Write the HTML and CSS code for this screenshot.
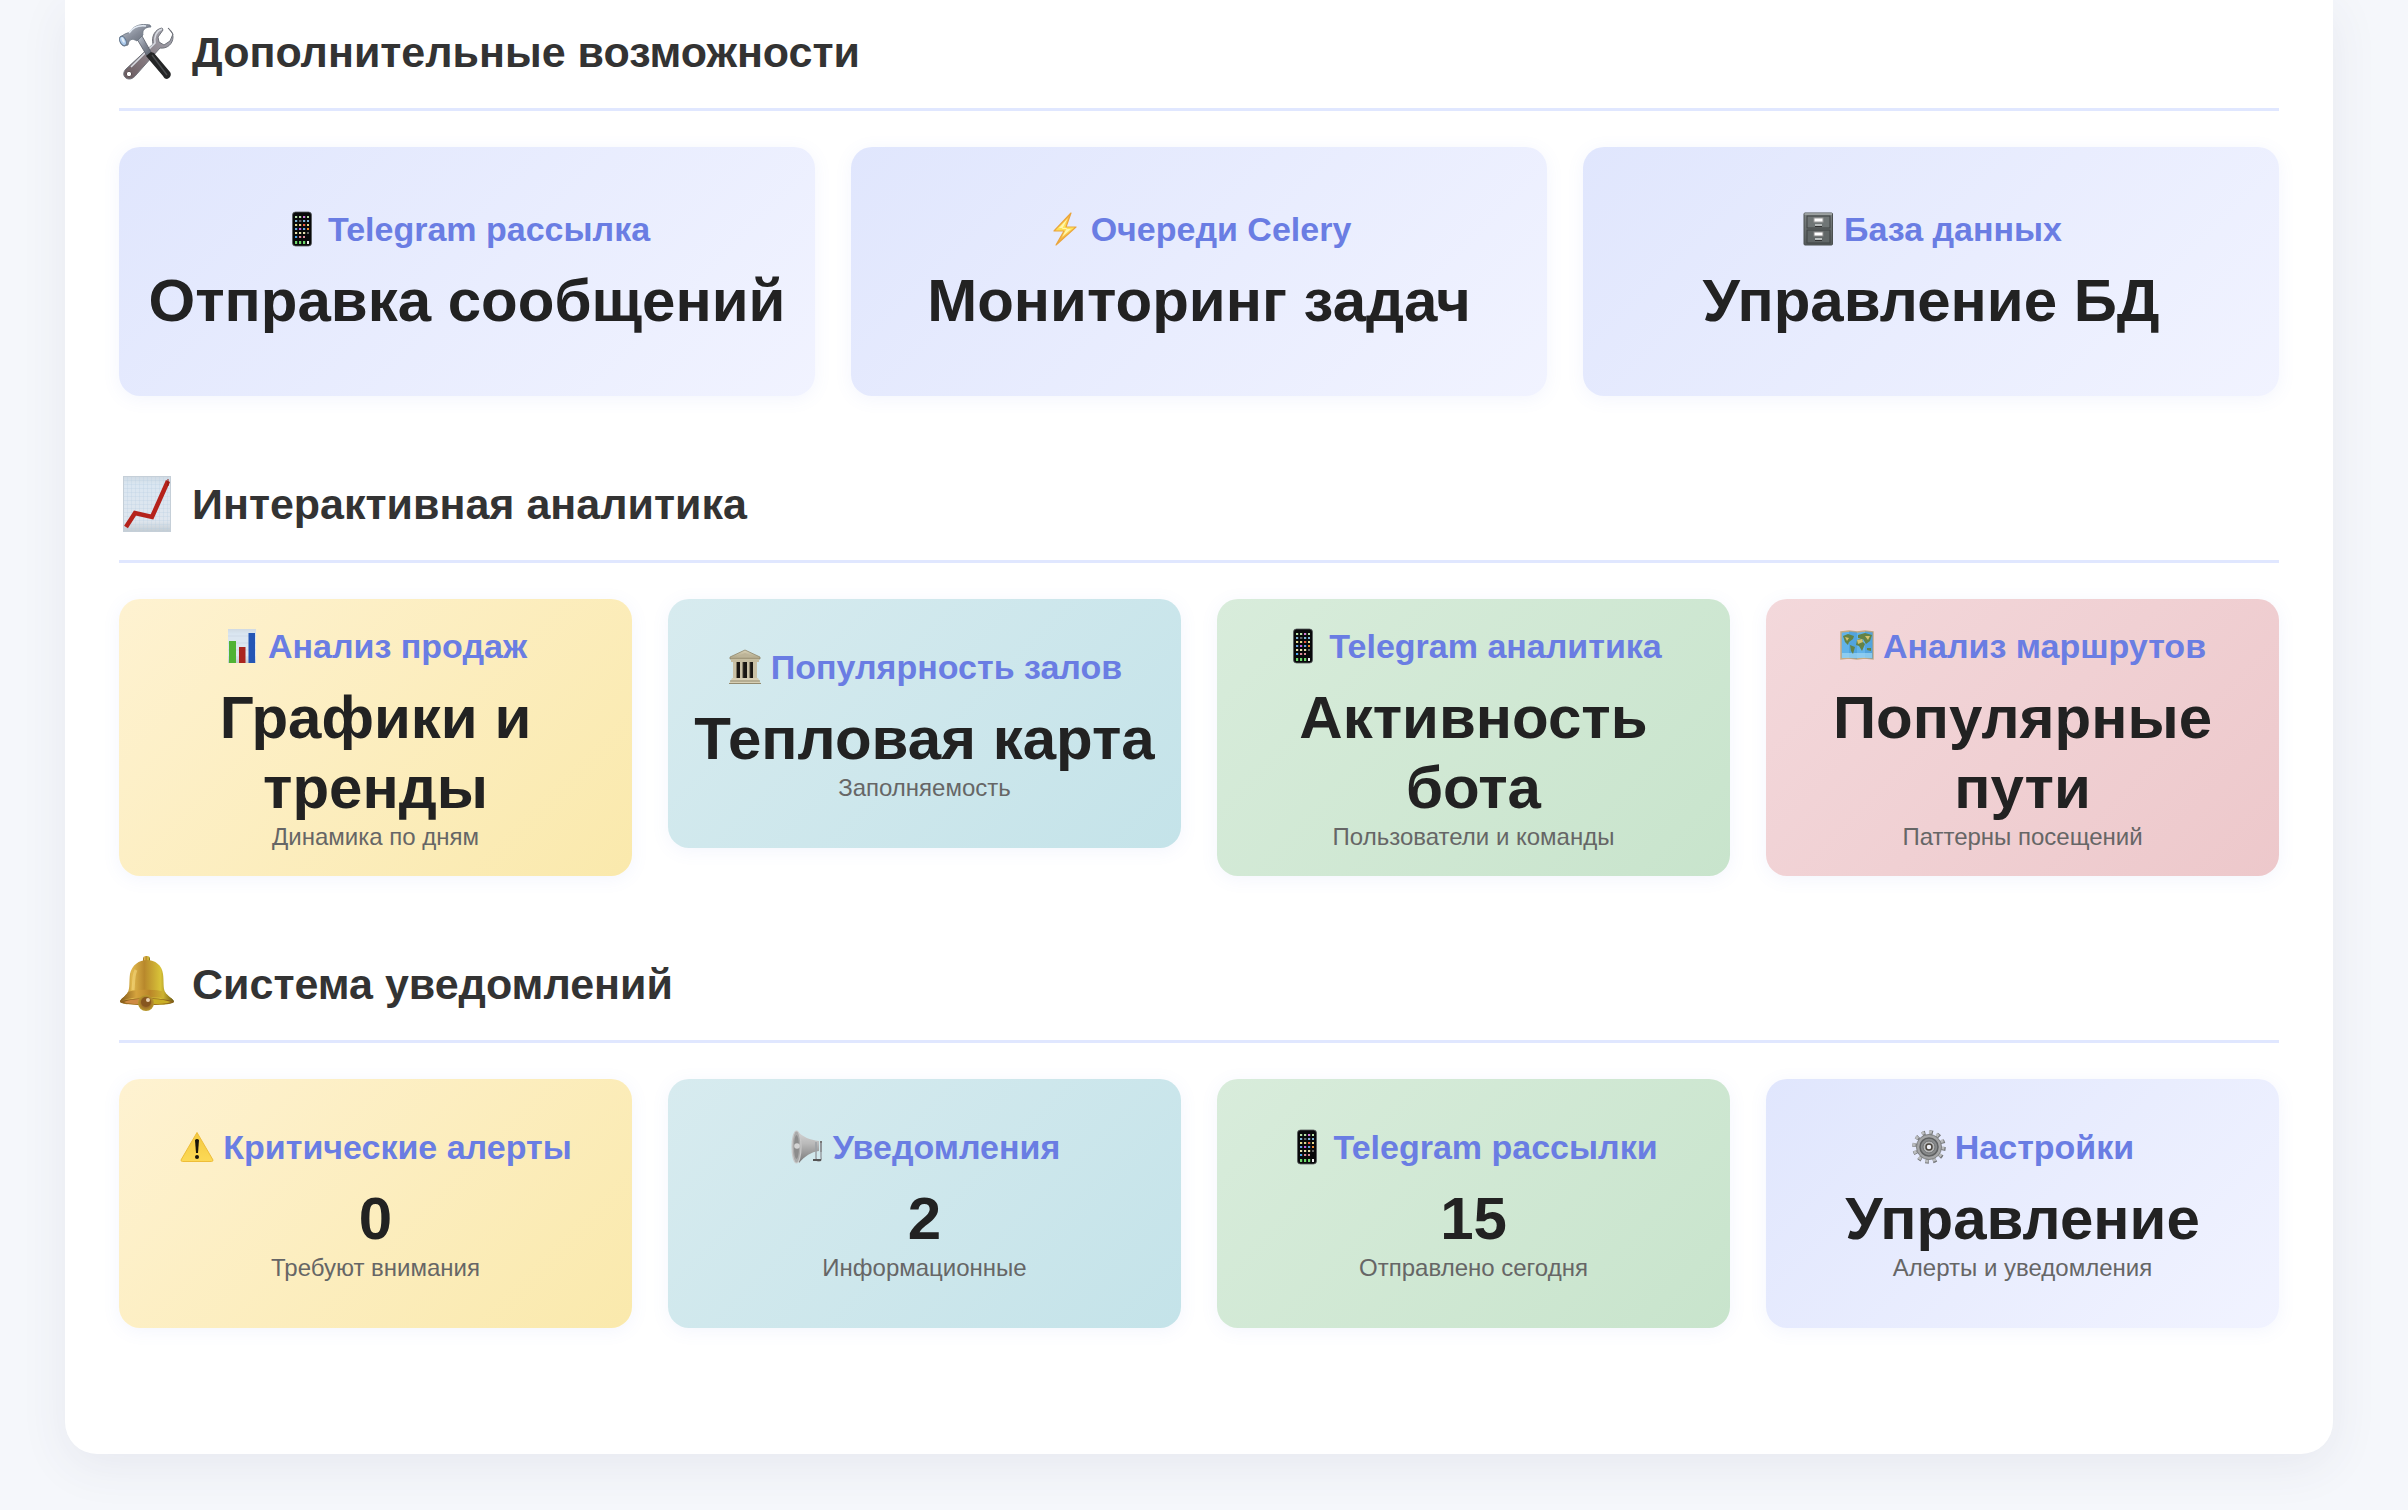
FILE: index.html
```html
<!DOCTYPE html>
<html lang="ru">
<head>
<meta charset="utf-8">
<meta name="viewport" content="width=device-width, initial-scale=1">
<title>Панель управления</title>
<link rel="stylesheet" href="styles.css">
</head>
<body>
<svg class="sprite" aria-hidden="true">
  <defs>
    <linearGradient id="steel" x1="0" y1="0" x2="1" y2="1"><stop offset="0" stop-color="#c3cad5"/><stop offset=".5" stop-color="#858b98"/><stop offset="1" stop-color="#59606c"/></linearGradient>
    <linearGradient id="handle" x1="1" y1="0" x2="0" y2="1"><stop offset="0" stop-color="#a9adb8"/><stop offset=".5" stop-color="#8b8188"/><stop offset="1" stop-color="#68585c"/></linearGradient>
    <linearGradient id="paper" x1="0" y1="0" x2="0" y2="1"><stop offset="0" stop-color="#d0dae3"/><stop offset=".15" stop-color="#dae6f1"/><stop offset=".8" stop-color="#dfe6ee"/><stop offset="1" stop-color="#c2cbd2"/></linearGradient>
    <linearGradient id="gold" x1="0" y1="0" x2="1" y2="0"><stop offset="0" stop-color="#8d671d"/><stop offset=".22" stop-color="#e1b84e"/><stop offset=".45" stop-color="#b8882c"/><stop offset=".75" stop-color="#d8c338"/><stop offset="1" stop-color="#776115"/></linearGradient>
    <linearGradient id="brim" x1="0" y1="0" x2="1" y2="0"><stop offset="0" stop-color="#81591a"/><stop offset=".3" stop-color="#d5a33d"/><stop offset=".55" stop-color="#ba8528"/><stop offset=".8" stop-color="#cdb331"/><stop offset="1" stop-color="#685612"/></linearGradient>
    <radialGradient id="clapper"><stop offset="0" stop-color="#e4b88a"/><stop offset=".5" stop-color="#9d6a28"/><stop offset="1" stop-color="#b99a2c"/></radialGradient>
    <linearGradient id="cabinet" x1="0" y1="0" x2="0" y2="1"><stop offset="0" stop-color="#7e8383"/><stop offset="1" stop-color="#555a5a"/></linearGradient>
    <linearGradient id="bolt" x1="0" y1="0" x2="0" y2="1"><stop offset="0" stop-color="#f8a838"/><stop offset=".45" stop-color="#ffe75a"/><stop offset="1" stop-color="#f09a35"/></linearGradient>
    <linearGradient id="warn" x1="0" y1="0" x2="0" y2="1"><stop offset="0" stop-color="#f3c93f"/><stop offset="1" stop-color="#fcd956"/></linearGradient>
    <linearGradient id="horn" x1="0" y1="0" x2="0" y2="1"><stop offset="0" stop-color="#d7d7d7"/><stop offset=".4" stop-color="#b9b9b9"/><stop offset="1" stop-color="#777"/></linearGradient>
    <linearGradient id="stone" x1="0" y1="0" x2="0" y2="1"><stop offset="0" stop-color="#d9d1b5"/><stop offset="1" stop-color="#aaa184"/></linearGradient>
    <pattern id="grid" width="4" height="4" patternUnits="userSpaceOnUse"><path d="M4 0H0V4" fill="none" stroke="#b3cbe0" stroke-width=".5"/></pattern>
  </defs>

  <symbol id="i-tools" viewBox="0 0 56 56">
    <path d="M49 4c3 2 5 5 5 9 0 7-6 12-13 11L17 51c-3 4-7 5-10 3s-3-6 0-9l27-25c-2-7 2-15 9-16l1 2-5 7 1 5 5 3 6-4 3-7z" fill="url(#handle)" stroke="#70737b" stroke-width="1"/>
    <path d="M43 5c-6 2-8 8-7 14L12 43" fill="none" stroke="#d8dbe2" stroke-width="1.6"/>
    <circle cx="10" cy="50" r="2.7" fill="#fff" stroke="#5b4f52"/>
    <path d="M18 15l5-3 9 16-4 4z" fill="url(#steel)" stroke="#555b66" stroke-width=".8"/>
    <path d="M27 32l5-4 3 1 16 19c2 3 0 6-3 7-2 0-3-1-4-3z" fill="#242526"/>
    <path d="M33 31l15 20" stroke="#4a4c4e" stroke-width="1.4"/>
    <path d="M1 13l5-3 5-2C14 2 22-1 31 1l1 2c-6 0-9 3-8 8l-6 6c-5-3-8-2-9 4l-4 1c-3-1-5-5-4-9z" fill="url(#steel)" stroke="#67717f" stroke-width=".8"/>
    <path d="M10 9c4-6 10-8 17-7" fill="none" stroke="#e5ecf5" stroke-width="1.5"/>
    <ellipse cx="4" cy="17" rx="3" ry="5" fill="#aac8ea" stroke="#66798f" transform="rotate(-25 4 17)"/>
    <ellipse cx="4" cy="16" rx="1.2" ry="3" fill="#e2effa" transform="rotate(-25 4 16)"/>
  </symbol>

  <symbol id="i-trend" viewBox="0 0 56 56">
    <rect x="4" y="0" width="48" height="56" fill="url(#paper)"/>
    <rect x="4" y="0" width="48" height="56" fill="url(#grid)"/>
    <rect x="4.500" y=".5" width="47" height="55" fill="none" stroke="#c5cfd8"/>
    <path d="M7 51l9-14 17 4L49 5" fill="none" stroke="#b5221b" stroke-width="4.500"/>
    <path d="M49 3v7" stroke="#87170f" stroke-width="1"/>
  </symbol>

  <symbol id="i-bell" viewBox="0 0 56 56">
    <rect x="24" y="0" width="7" height="8" rx="3" fill="url(#gold)"/>
    <path d="M1 46c0-3 6-6 8-10 2-4 1-11 2-18C13 9 20 4 28 4s15 5 16 14c1 7 0 14 2 18 2 4 9 7 9 10-3 3-15 3-27 3S4 49 1 46z" fill="url(#gold)"/>
    <path d="M9 36c7-3 30-3 37 0 2 4 9 7 9 10-3-3-15-5-27-5S4 43 1 46c0-3 6-6 8-10z" fill="url(#brim)"/>
    <path d="M1 46c10-5 44-5 54 0-6 4-48 4-54 0z" fill="#8d611c"/>
    <path d="M5 46c7-3 14-3 18-3v5c-7 0-14 0-18-2z" fill="#cf8b43"/>
    <path d="M34 43c7 0 12 1 18 3-6 2-11 2-18 2z" fill="#c9ae26"/>
    <circle cx="27" cy="47" r="8" fill="url(#clapper)"/>
    <circle cx="27" cy="46" r="5" fill="#87561f"/><circle cx="29" cy="44" r="2" fill="#edd5b5"/>
    <path d="M17 14c-3 6-2 12-3 20" fill="none" stroke="#f5d77b" stroke-width="3" opacity=".6"/>
  </symbol>

  <symbol id="i-phone" viewBox="0 0 36 36">
    <rect x="8.500" y="1" width="19" height="34" rx="3" fill="#08090a" stroke="#55595c" stroke-width=".8"/>
    <g stroke-width="2.200" stroke-dasharray="2.200 1.800" fill="none">
      <path d="M11 6h14" stroke="#b6e0a6"/><path d="M11 10h14" stroke="#7fb5d8"/><path d="M11 14h14" stroke="#e4d98c"/><path d="M11 18h14" stroke="#67a7e4"/><path d="M11 22h14" stroke="#e6e0ae"/><path d="M11 26h10" stroke="#dc8a9a"/>
      <path d="M11 31.500h14" stroke="#6ed86c" stroke-width="3"/>
    </g>
    <g><path d="M19 5h2v2h-2z" fill="#d678db"/><path d="M15 17h2v2h-2z" fill="#d05de0"/><path d="M23 17h2v2h-2z" fill="#f08b2e"/><path d="M19 13h2v2h-2z" fill="#f05a45"/><path d="M15 9h2v2h-2zM23 21h2v2h-2z" fill="#666"/><path d="M11 25h2v2h-2z" fill="#4aa9f5"/><path d="M23 30h2v3h-2z" fill="#eee"/></g>
  </symbol>

  <symbol id="i-bolt" viewBox="0 0 36 36">
    <path d="M24 2L7 20h10l-8 14 20-18H19z" fill="url(#bolt)" stroke="#eaa53c" stroke-width="1.200" stroke-linejoin="round"/>
    <path d="M21 7l-9 10h8l-5 9 9-8h-9z" fill="#fff6ad"/>
  </symbol>

  <symbol id="i-cabinet" viewBox="0 0 36 36">
    <rect x="4" y="2" width="28.500" height="32" rx="1" fill="url(#cabinet)" stroke="#4b5050"/>
    <path d="M4.500 3h27.500" stroke="#a7acac" stroke-width="1.500"/>
    <rect x="7" y="5" width="23" height="12" fill="#707676" stroke="#3e4343"/>
    <rect x="7" y="19" width="23" height="13" fill="#616767" stroke="#3e4343"/>
    <rect x="14" y="7" width="9" height="4" fill="#fff" stroke="#999"/><rect x="14" y="21" width="9" height="4" fill="#fff" stroke="#888"/>
    <path d="M15 14h7M15 28h7" stroke="#b7bcbc" stroke-width="2"/><path d="M15 15.500h7M15 29.500h7" stroke="#333"/>
  </symbol>

  <symbol id="i-bars" viewBox="0 0 36 36">
    <rect x="4" y="1" width="28" height="34" fill="url(#paper)"/>
    <path d="M4 8h28M4 15h28M4 22h28M4 29h28" stroke="#cbd5e0" stroke-width=".6"/>
    <rect x="5" y="13" width="7" height="22" fill="#50b334"/><rect x="15" y="19" width="6.500" height="16" fill="#ab251e"/><rect x="24.500" y="5" width="6.500" height="30" fill="#2456b5"/>
  </symbol>

  <symbol id="i-museum" viewBox="0 0 36 36">
    <path d="M18 1l15 7v2H3V8z" fill="url(#stone)" stroke="#8f876b" stroke-width=".8"/>
    <path d="M18 4l9 4H9z" fill="#bcb397"/>
    <path d="M4 10h28v3H4z" fill="#c5bda0"/>
    <path d="M6 13h24v17H6z" fill="#191713"/>
    <path d="M6 13h4v17H6zM13 13h3v17h-3zM20 13h3v17h-3zM26 13h4v17h-4z" fill="#c9c1a5"/>
    <path d="M9.500 13v17M15.700 13v17M22.700 13v17" stroke="#7d765f"/>
    <path d="M5 29h26l3 6H2z" fill="#d7cfb4"/><path d="M3 32h30M2 34.500h32" stroke="#938b70"/>
  </symbol>

  <symbol id="i-map" viewBox="0 0 36 36">
    <path d="M2 4l8-1 8 1 8-1 8 1v27l-8-1-8 1-8-1-8 1z" fill="#61b3e9" stroke="#c6aa83" stroke-width="1.500"/>
    <path d="M10 3v27l8 1V4zM26 3v27l8 1V4z" fill="#3c8fca" opacity=".4"/>
    <path d="M3 25h30v5H3z" fill="#9ed7f3" opacity=".7"/>
    <path d="M4 8l5-2 6 2-1 3-4 3-1 3-3-3zM11 17l5 2-2 7-2-3zM18 12l5-2 1 4 2 2-3 7-3-5-3-1zM19 7l7-2 7 2-2 6-4 3-3-5-5-1zM28 20l4 0v3l-4-1z" fill="#638245"/>
    <path d="M18 12l5-1 1 3-5 2zM26 8l5 0-2 4zM6 9l4 1-2 3z" fill="#d4c26e"/>
  </symbol>

  <symbol id="i-warning" viewBox="0 0 36 36">
    <path d="M18 3.500L34 31q0 1.500-1.500 1.500h-29Q2 32.500 2 31z" fill="url(#warn)" stroke="#eebd38" stroke-width="1" stroke-linejoin="round"/>
    <path d="M16 11q2-2 4 0l-1 13h-2z" fill="#17140a"/><circle cx="18" cy="28" r="2" fill="#17140a"/>
  </symbol>

  <symbol id="i-horn" viewBox="0 0 36 36">
    <path d="M8 2c6 6 13 9 22 10v10c-8 1-14 5-20 12z" fill="url(#horn)"/>
    <ellipse cx="7.500" cy="18" rx="4.500" ry="16" fill="#aaa" stroke="#c9c9c9" stroke-width="1.200"/>
    <ellipse cx="7.500" cy="18" rx="2.500" ry="12" fill="#8c8c8c"/><circle cx="8" cy="17" r="2.800" fill="#d4d4d4"/>
    <path d="M31 12h2v11h-2z" fill="#777"/>
    <path d="M27 13v16q0 3 3 3t2-4V14" fill="none" stroke="#9ba0a5" stroke-width="1.500"/><path d="M24 31h8" stroke="#555" stroke-width="2"/>
  </symbol>

  <symbol id="i-gear" viewBox="0 0 36 36">
    <circle cx="18" cy="18" r="14.500" fill="none" stroke="#77797b" stroke-width="4.500" stroke-dasharray="3.500 4.092"/>
    <circle cx="17.500" cy="17.500" r="14.500" fill="none" stroke="#babcbe" stroke-width="3" stroke-dasharray="3 4.592"/>
    <circle cx="18" cy="18" r="12.500" fill="#a4a5a6" stroke="#7f8182"/>
    <circle cx="18" cy="18" r="9" fill="#898b8c" stroke="#5f6162" stroke-width="1.500"/>
    <circle cx="18" cy="18" r="6" fill="#b4b5b6" stroke="#707273"/>
    <circle cx="18" cy="18" r="3" fill="#f0f2fa" stroke="#49443b" stroke-width="1.500"/>
  </symbol>
</svg>

<main class="panel">
  <section class="section">
    <h2 class="section-title"><svg class="section-icon" aria-hidden="true"><use href="#i-tools"/></svg>Дополнительные возможности</h2>
    <div class="cards cards-three">
      <a class="card card-plain" href="#telegram">
        <h3 class="card-title"><svg class="icon" aria-hidden="true"><use href="#i-phone"/></svg>Telegram рассылка</h3>
        <p class="value">Отправка сообщений</p>
      </a>
      <a class="card card-plain" href="#celery">
        <h3 class="card-title"><svg class="icon" aria-hidden="true"><use href="#i-bolt"/></svg>Очереди Celery</h3>
        <p class="value">Мониторинг задач</p>
      </a>
      <a class="card card-plain" href="#database">
        <h3 class="card-title"><svg class="icon" aria-hidden="true"><use href="#i-cabinet"/></svg>База данных</h3>
        <p class="value">Управление БД</p>
      </a>
    </div>
  </section>

  <section class="section">
    <h2 class="section-title"><svg class="section-icon" aria-hidden="true"><use href="#i-trend"/></svg>Интерактивная аналитика</h2>
    <div class="cards cards-four">
      <a class="card card-yellow" href="#sales">
        <h3 class="card-title"><svg class="icon" aria-hidden="true"><use href="#i-bars"/></svg>Анализ продаж</h3>
        <p class="value">Графики и тренды</p>
        <p class="note">Динамика по дням</p>
      </a>
      <a class="card card-blue" href="#halls">
        <h3 class="card-title"><svg class="icon" aria-hidden="true"><use href="#i-museum"/></svg>Популярность залов</h3>
        <p class="value">Тепловая карта</p>
        <p class="note">Заполняемость</p>
      </a>
      <a class="card card-green" href="#bot">
        <h3 class="card-title"><svg class="icon" aria-hidden="true"><use href="#i-phone"/></svg>Telegram аналитика</h3>
        <p class="value">Активность бота</p>
        <p class="note">Пользователи и команды</p>
      </a>
      <a class="card card-red" href="#routes">
        <h3 class="card-title"><svg class="icon" aria-hidden="true"><use href="#i-map"/></svg>Анализ маршрутов</h3>
        <p class="value">Популярные пути</p>
        <p class="note">Паттерны посещений</p>
      </a>
    </div>
  </section>

  <section class="section">
    <h2 class="section-title"><svg class="section-icon" aria-hidden="true"><use href="#i-bell"/></svg>Система уведомлений</h2>
    <div class="cards cards-four">
      <a class="card card-yellow" href="#alerts">
        <h3 class="card-title"><svg class="icon" aria-hidden="true"><use href="#i-warning"/></svg>Критические алерты</h3>
        <p class="value">0</p>
        <p class="note">Требуют внимания</p>
      </a>
      <a class="card card-blue" href="#notifications">
        <h3 class="card-title"><svg class="icon" aria-hidden="true"><use href="#i-horn"/></svg>Уведомления</h3>
        <p class="value">2</p>
        <p class="note">Информационные</p>
      </a>
      <a class="card card-green" href="#mailings">
        <h3 class="card-title"><svg class="icon" aria-hidden="true"><use href="#i-phone"/></svg>Telegram рассылки</h3>
        <p class="value">15</p>
        <p class="note">Отправлено сегодня</p>
      </a>
      <a class="card card-plain" href="#settings">
        <h3 class="card-title"><svg class="icon" aria-hidden="true"><use href="#i-gear"/></svg>Настройки</h3>
        <p class="value">Управление</p>
        <p class="note">Алерты и уведомления</p>
      </a>
    </div>
  </section>
</main>
</body>
</html>
```
FILE: styles.css
```css
* {
  box-sizing: border-box;
}

body {
  margin: 0;
  padding: 0 75px 56px 65px;
  background: #f5f7fb;
  color: #222;
  font-family: "Liberation Sans", Arial, sans-serif;
}

.sprite {
  position: absolute;
  width: 0;
  height: 0;
}

.panel {
  padding: 16px 54px 54px;
  background: #fff;
  border-radius: 0 0 32px 32px;
  box-shadow: 0 12px 48px rgba(60, 60, 100, 0.08);
}

.section {
  margin-bottom: 72px;
}

.section-title {
  display: flex;
  align-items: center;
  gap: 17px;
  margin: 0 0 36px;
  padding-bottom: 20px;
  border-bottom: 3px solid #e0e7ff;
  color: #333;
  font-size: 43px;
  line-height: 72px;
}

.section-icon {
  flex: none;
  width: 56px;
  height: 56px;
}

.cards {
  display: grid;
  gap: 36px;
  align-items: start;
}

.cards-three {
  grid-template-columns: repeat(3, 1fr);
}

.cards-four {
  grid-template-columns: repeat(4, 1fr);
}

.card {
  display: flex;
  flex-direction: column;
  align-items: center;
  justify-content: center;
  min-height: 249px;
  padding: 27px 18px 25px;
  border-radius: 21px;
  box-shadow: 0 3px 18px rgba(102, 126, 234, 0.08);
  color: inherit;
  text-align: center;
  text-decoration: none;
}

.card-plain {
  background: linear-gradient(135deg, #e0e6fd, #f1f3ff);
}

.card-yellow {
  background: linear-gradient(135deg, #fef2d1, #fae9ac);
}

.card-blue {
  background: linear-gradient(135deg, #d7ebef, #c4e3e9);
}

.card-green {
  background: linear-gradient(135deg, #d8ecdb, #c8e4cc);
}

.card-red {
  background: linear-gradient(135deg, #f3d8db, #edc8cb);
}

.card-title {
  display: flex;
  align-items: center;
  gap: 8px;
  margin: 0 0 17px;
  color: #6a7de3;
  font-size: 34px;
  line-height: 40px;
}

.icon {
  flex: none;
  width: 36px;
  height: 36px;
}

.value {
  margin: 0;
  font-size: 60px;
  font-weight: 700;
  line-height: 70px;
}

.note {
  margin: 0;
  color: #666;
  font-size: 24px;
  line-height: 28px;
}
```
